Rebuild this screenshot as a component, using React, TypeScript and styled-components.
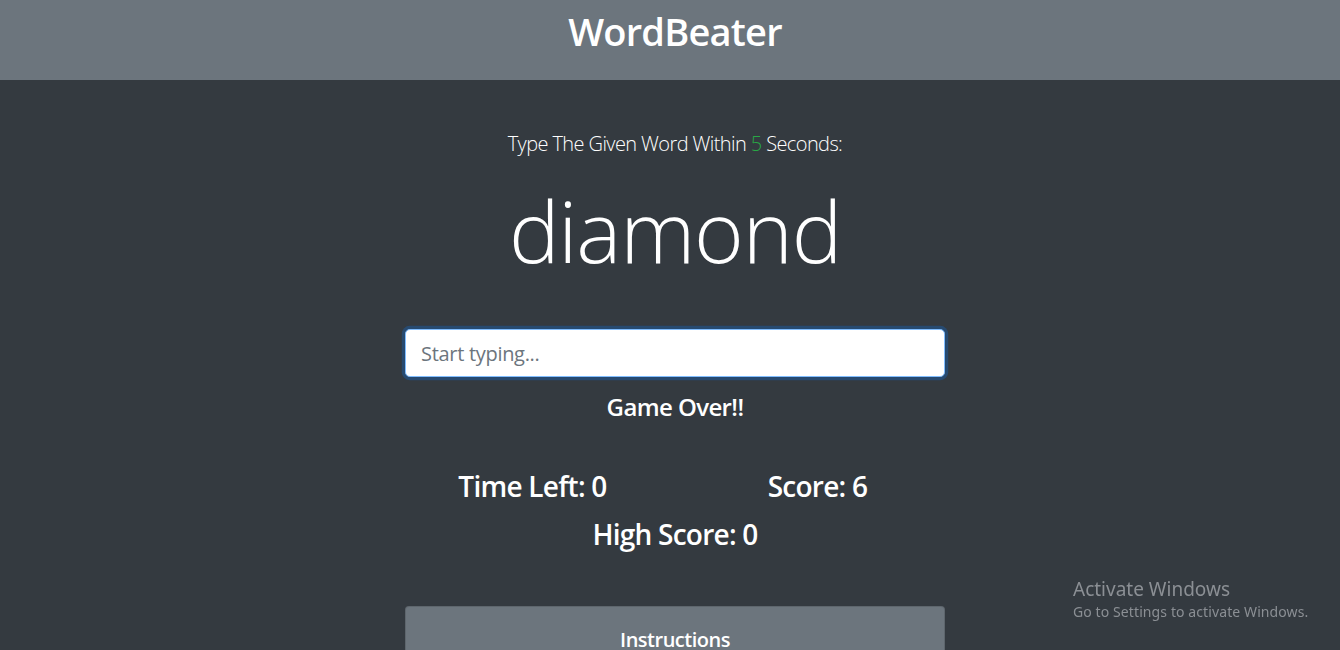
import React from "react";
import styled, { createGlobalStyle } from "styled-components";

const Global = createGlobalStyle`
  html, body { margin: 0; padding: 0; overflow: hidden; }
  body {
    background: #343a40;
    color: #fff;
    font-family: "Open Sans", "Noto Sans", sans-serif;
  }
  #root { width: 1350px; min-height: 650px; background: #343a40; }
  * { box-sizing: border-box; }
`;

const Header = styled.header`
  background: #6c757d;
  height: 80px;
  display: flex;
  justify-content: center;
  padding-top: 9px;
`;

const Title = styled.h1`
  margin: 0;
  font-size: 38px;
  font-weight: 600;
  line-height: 1.2;
  letter-spacing: -0.8px;
  color: #fff;
`;

const Main = styled.main`
  width: 540px;
  margin: 0 auto;
  display: flex;
  flex-direction: column;
  align-items: center;
  text-align: center;
`;

const Lead = styled.p`
  margin: 49px 0 0;
  font-size: 20px;
  font-weight: 300;
  line-height: 30px;
  letter-spacing: -0.6px;
`;

const Success = styled.span`
  color: #28a745;
`;

const Word = styled.h2`
  margin: 20px 0 48px;
  font-size: 85px;
  font-weight: 300;
  line-height: 1.2;
  letter-spacing: -1.2px;
`;

const Input = styled.input`
  width: 540px;
  height: 48px;
  padding: 8px 15px;
  font-family: inherit;
  font-size: 20px;
  letter-spacing: -0.3px;
  color: #495057;
  background: #fff;
  border: 1px solid #80bdff;
  border-radius: 4.8px;
  box-shadow: 0 0 0 3.2px rgba(0, 123, 255, 0.25);
  outline: none;
  &::placeholder { color: #6c757d; }
`;

const Message = styled.h4`
  margin: 16px 0 0;
  font-size: 24px;
  font-weight: 600;
  line-height: 1.2;
  letter-spacing: -0.6px;
`;

const StatsRow = styled.div`
  width: 570px;
  margin-top: 48px;
  display: grid;
  grid-template-columns: 1fr 1fr;
`;

const Stat = styled.h3`
  margin: 0;
  font-size: 28px;
  font-weight: 600;
  line-height: 1.2;
  letter-spacing: -0.75px;
`;

const HighScore = styled(Stat)`
  margin-top: 15px;
`;

const Card = styled.div`
  width: 540px;
  margin-top: 54px;
  background: #6c757d;
  border: 1px solid rgba(0, 0, 0, 0.125);
  border-radius: 4px;
  padding: 21px 20px 20px;
`;

const CardTitle = styled.h5`
  margin: 0;
  font-size: 20px;
  font-weight: 600;
  line-height: 1.2;
  letter-spacing: -0.5px;
`;

const Watermark = styled.div`
  position: fixed;
  left: 1073px;
  top: 577px;
  color: #8b8f94;
  font-family: "Noto Sans", sans-serif;
`;

const WmTitle = styled.div`
  font-size: 19px;
  line-height: 24px;
`;

const WmSub = styled.div`
  font-size: 14px;
  line-height: 22px;
  letter-spacing: 0.1px;
`;

export default function App() {
  return (
    <>
      <Global />
      <Header>
        <Title>WordBeater</Title>
      </Header>
      <Main>
        <Lead>
          Type The Given Word Within <Success>5</Success> Seconds:
        </Lead>
        <Word>diamond</Word>
        <Input type="text" placeholder="Start typing..." autoFocus />
        <Message>Game Over!!</Message>
        <StatsRow>
          <Stat>Time Left: 0</Stat>
          <Stat>Score: 6</Stat>
        </StatsRow>
        <HighScore>High Score: 0</HighScore>
        <Card>
          <CardTitle>Instructions</CardTitle>
        </Card>
      </Main>
      <Watermark>
        <WmTitle>Activate Windows</WmTitle>
        <WmSub>Go to Settings to activate Windows.</WmSub>
      </Watermark>
    </>
  );
}
